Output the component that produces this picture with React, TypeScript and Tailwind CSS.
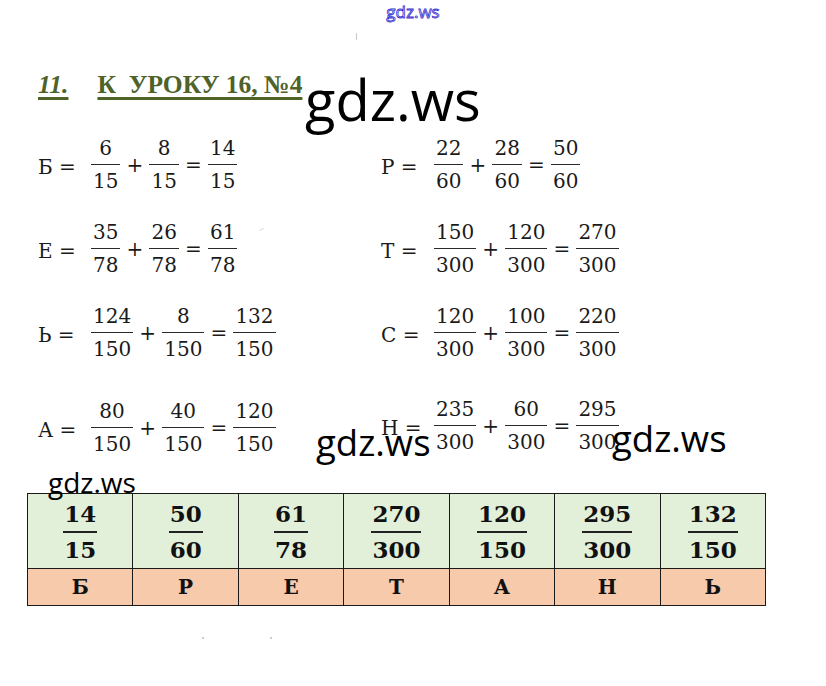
import React from "react";

const Frac = ({ n, d }: { n: string; d: string }) => (
  <span className="inline-flex flex-col items-center">
    <span className="px-[2px] leading-[24px]">{n}</span>
    <span className="my-[4px] h-px self-stretch bg-[#2a2a2a]" />
    <span className="px-[2px] leading-[24px]">{d}</span>
  </span>
);

const Op = ({ s }: { s: string }) => (
  <span className="w-[29px] text-center leading-[24px]">{s}</span>
);

const Eq = ({ l, f, cls }: { l: string; f: [string, string][]; cls?: string }) => (
  <div className={`flex items-center ${cls ?? ""}`}>
    <span className="w-[53px] pt-[5px] leading-[24px] whitespace-pre">{l} =</span>
    <Frac n={f[0][0]} d={f[0][1]} />
    <Op s="+" />
    <Frac n={f[1][0]} d={f[1][1]} />
    <Op s="=" />
    <Frac n={f[2][0]} d={f[2][1]} />
  </div>
);

const rows: { l: [string, [string, string][]]; r: [string, [string, string][]]; mt: string; rc?: string }[] = [
  {
    l: ["Б", [["6", "15"], ["8", "15"], ["14", "15"]]],
    r: ["Р", [["22", "60"], ["28", "60"], ["50", "60"]]],
    mt: "mt-[36px]",
  },
  {
    l: ["Е", [["35", "78"], ["26", "78"], ["61", "78"]]],
    r: ["Т", [["150", "300"], ["120", "300"], ["270", "300"]]],
    mt: "mt-[27px]",
  },
  {
    l: ["Ь", [["124", "150"], ["8", "150"], ["132", "150"]]],
    r: ["С", [["120", "300"], ["100", "300"], ["220", "300"]]],
    mt: "mt-[27px]",
  },
  {
    l: ["А", [["80", "150"], ["40", "150"], ["120", "150"]]],
    r: ["Н", [["235", "300"], ["60", "300"], ["295", "300"]]],
    mt: "mt-[38px]",
    rc: "-mt-[2px]",
  },
];

const table: [string, string, string][] = [
  ["14", "15", "Б"],
  ["50", "60", "Р"],
  ["61", "78", "Е"],
  ["270", "300", "Т"],
  ["120", "150", "А"],
  ["295", "300", "Н"],
  ["132", "150", "Ь"],
];

export default function App() {
  return (
    <div className="relative w-[826px] h-[686px] overflow-hidden bg-white">
      {/* top small watermark */}
      <div className="pt-[2px] text-center text-[17px] leading-[20px] font-['Open_Sans',sans-serif] text-white [-webkit-text-stroke:0.8px_#2f2fd0]">
        gdz.ws
      </div>
      <div className="ml-[356px] mt-[11px] h-[7px] w-px bg-[#c8c8c8]" />

      {/* header */}
      <div className="mt-[30px] flex pl-[38px] text-[25.5px] leading-[30px] font-bold text-[#4f6228] font-['Liberation_Serif',serif]">
        <span className="italic underline decoration-[3px] underline-offset-[4px]">11.</span>
        <span className="ml-[29px] whitespace-pre underline decoration-[3px] underline-offset-[4px]">К  УРОКУ 16, №4</span>
      </div>

      {/* equations */}
      <div className="flex flex-col pl-[38px] text-[20px] text-[#1a1a1a] font-['DejaVu_Serif',serif]">
        {rows.map((row, i) => (
          <div key={i} className={`grid grid-cols-[343px_auto] items-start ${row.mt}`}>
            <Eq l={row.l[0]} f={row.l[1]} />
            <Eq l={row.r[0]} f={row.r[1]} cls={row.rc} />
          </div>
        ))}
      </div>

      {/* table */}
      <table className="ml-[27px] mt-[37px] w-[739px] table-fixed border-collapse font-['DejaVu_Serif',serif] font-bold text-[#111]">
        <tbody>
          <tr className="h-[75px] bg-[#e2efd9]">
            {table.map((c, i) => (
              <td key={i} className="border border-[#1a1a1a] p-0 text-center align-middle">
                <span className="inline-flex flex-col items-center pt-[2px] text-[23px]">
                  <span className="px-[1px] leading-[26px]">{c[0]}</span>
                  <span className="my-[4px] h-[1.5px] self-stretch bg-[#222]" />
                  <span className="px-[1px] leading-[26px]">{c[1]}</span>
                </span>
              </td>
            ))}
          </tr>
          <tr className="h-[37px] bg-[#f7caac]">
            {table.map((c, i) => (
              <td key={i} className="border border-[#1a1a1a] p-0 text-center align-middle text-[20px] leading-[24px]">
                {c[2]}
              </td>
            ))}
          </tr>
        </tbody>
      </table>

      {/* overlay watermarks */}
      <div className="absolute left-[305px] top-[71px] text-[56px] leading-none text-black font-['Open_Sans',sans-serif]">
        gdz.ws
      </div>
      <div className="absolute left-[316px] top-[424px] text-[36.5px] leading-none text-black font-['Open_Sans',sans-serif]">
        gdz.ws
      </div>
      <div className="absolute left-[612px] top-[420px] text-[36.5px] leading-none text-black font-['Open_Sans',sans-serif]">
        gdz.ws
      </div>
      <div className="absolute left-[48px] top-[468px] text-[28px] leading-none text-black font-['Open_Sans',sans-serif]">
        gdz.ws
      </div>

      {/* faint marks */}
      <div className="absolute left-[202px] top-[637px] h-[2px] w-[2px] bg-[#cccccc]" />
      <div className="absolute left-[270px] top-[637px] h-[2px] w-[2px] bg-[#cccccc]" />
      <div className="absolute left-[259px] top-[229px] h-px w-[5px] rotate-[-30deg] bg-[#dddddd]" />
    </div>
  );
}
